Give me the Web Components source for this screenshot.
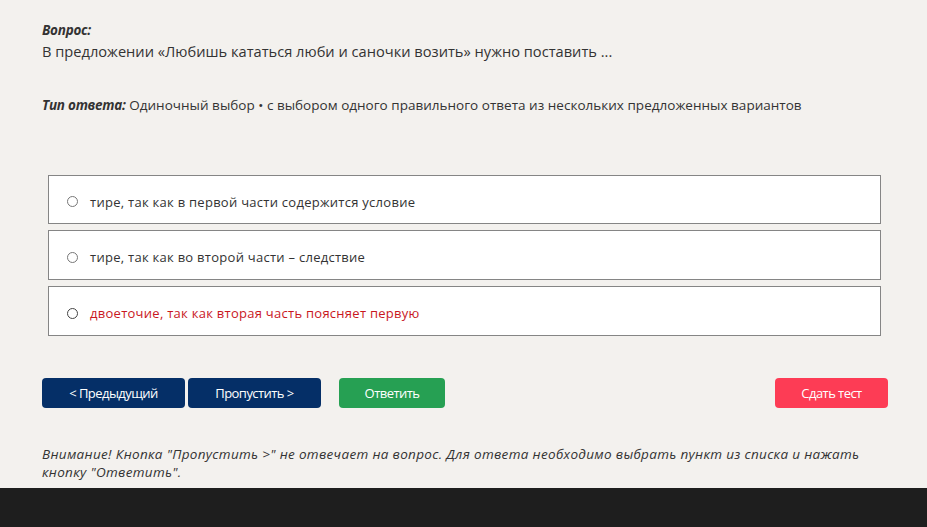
<!DOCTYPE html>
<html lang="ru">
<head>
<meta charset="utf-8">
<title>Тест</title>
<style>
  html, body { margin: 0; height: 100%; }
  body { background: #f3f1ee; overflow: hidden; font-family: "Open Sans", "Noto Sans", sans-serif; color: #333; }
</style>
</head>
<body>
<test-page>
  <quiz-question slot="question">
    <span slot="label">Вопрос:</span>
    В предложении «Любишь кататься люби и саночки возить» нужно поставить ...
  </quiz-question>
  <answer-type slot="type">Одиночный выбор • с выбором одного правильного ответа из нескольких предложенных вариантов</answer-type>
  <quiz-option slot="options" style="--h:49px">тире, так как в первой части содержится условие</quiz-option>
  <quiz-option slot="options">тире, так как во второй части – следствие</quiz-option>
  <quiz-option slot="options" wrong>двоеточие, так как вторая часть поясняет первую</quiz-option>
  <quiz-button slot="actions" style="--w:143px">&lt; Предыдущий</quiz-button>
  <quiz-button slot="actions" style="--w:133px;margin-left:3px">Пропустить &gt;</quiz-button>
  <quiz-button slot="actions" kind="green" style="--w:106px;margin-left:18px">Ответить</quiz-button>
  <quiz-button slot="actions" kind="red" style="--w:113px;margin-left:auto">Сдать тест</quiz-button>
  <span slot="note">Внимание! Кнопка "Пропустить &gt;" не отвечает на вопрос. Для ответа необходимо выбрать пункт из списка и нажать кнопку "Ответить".</span>
</test-page>
<script>
class TestPage extends HTMLElement {
  constructor() {
    super();
    this.attachShadow({ mode: "open" });
    this.shadowRoot.innerHTML = `
      <style>
        :host { display: flex; flex-direction: column; height: 527px; box-sizing: border-box; }
        main { flex: 1; padding: 20px 39px 0 42px; min-height: 0; }
        #options { display: flex; flex-direction: column; gap: 6px; margin: 60px 7px 0 6px; }
        #actions { display: flex; margin-top: 42px; }
        #note { margin-top: 37px; font-size: 13.5px; line-height: 18px; font-style: italic; letter-spacing: .33px; }
        footer { height: 39px; background: #1e1e1e; }
      </style>
      <main>
        <slot name="question"></slot>
        <slot name="type"></slot>
        <div id="options"><slot name="options"></slot></div>
        <div id="actions"><slot name="actions"></slot></div>
        <div id="note"><slot name="note"></slot></div>
      </main>
      <footer></footer>
    `;
  }
}

class QuizQuestion extends HTMLElement {
  constructor() {
    super();
    this.attachShadow({ mode: "open" });
    this.shadowRoot.innerHTML = `
      <style>
        :host { display: block; font-size: 14.65px; line-height: 22px; }
        b { display: block; font-style: italic; font-size: 13.5px; letter-spacing: -.25px; line-height: 20px; }
      </style>
      <b><slot name="label"></slot></b>
      <slot></slot>
    `;
  }
}

class AnswerType extends HTMLElement {
  constructor() {
    super();
    this.attachShadow({ mode: "open" });
    this.shadowRoot.innerHTML = `
      <style>
        :host { display: block; margin-top: 33px; font-size: 13.5px; line-height: 20px; }
        b { font-style: italic; letter-spacing: -.25px; }
        span { letter-spacing: .02px; }
      </style>
      <b>Тип ответа:</b> <span><slot></slot></span>
    `;
  }
}

class QuizOption extends HTMLElement {
  constructor() {
    super();
    this.attachShadow({ mode: "open" });
    this.shadowRoot.innerHTML = `
      <style>
        :host { display: flex; align-items: center; height: var(--h, 50px); box-sizing: border-box; background: #fff; border: 1px solid #858585; padding: 4px 0 0 18px; font-size: 13px; letter-spacing: .27px; }
        :host([wrong]) { color: #c9171e; }
        i { width: 11px; height: 11px; box-sizing: border-box; border: 1px solid #777; border-radius: 50%; margin-right: 12px; background: #fff; flex: none; }
        :host([wrong]) i { border-color: #444; }
      </style>
      <i></i><slot></slot>
    `;
  }
}

class QuizButton extends HTMLElement {
  constructor() {
    super();
    this.attachShadow({ mode: "open" });
    this.shadowRoot.innerHTML = `
      <style>
        :host { display: flex; align-items: center; justify-content: center; width: var(--w); height: 30px; border-radius: 4px; background: #052f67; color: #fff; font-size: 13px; letter-spacing: -.55px; }
        :host([kind=green]) { background: #26a053; }
        :host([kind=red]) { background: #fd3c55; }
      </style>
      <slot></slot>
    `;
  }
}

customElements.define("test-page", TestPage);
customElements.define("quiz-question", QuizQuestion);
customElements.define("answer-type", AnswerType);
customElements.define("quiz-option", QuizOption);
customElements.define("quiz-button", QuizButton);
</script>
</body>
</html>
